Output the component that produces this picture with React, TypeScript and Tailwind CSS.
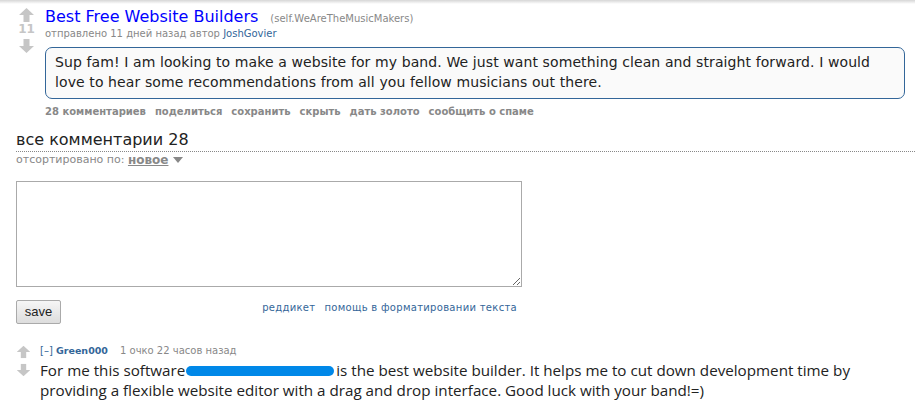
import React from "react";

function Arrow({ up, className }: { up: boolean; className?: string }) {
  return (
    <svg width="15" height="14" viewBox="0 0 15 14" className={className}>
      {up ? (
        <path d="M7.5 0 L15 7 L10.5 7 L10.5 14 L4.5 14 L4.5 7 L0 7 Z" fill="#c6c6c6" />
      ) : (
        <path d="M4.5 0 L10.5 0 L10.5 7 L15 7 L7.5 14 L0 7 L4.5 7 Z" fill="#c6c6c6" />
      )}
    </svg>
  );
}

export default function App() {
  const v = { fontFamily: "Verdana, 'DejaVu Sans', sans-serif" };
  return (
    <div className="w-[915px] h-[408px] bg-white overflow-hidden relative" style={v}>
      <div className="h-[4px] bg-gradient-to-b from-[#d6d6d6] to-white" />
      {/* post */}
      <div className="flex pl-[18px] pt-[4px]">
        <div className="flex flex-col items-center w-[17px]">
          <Arrow up />
          <div className="text-[12px] leading-[13px] font-bold text-[#c6c6c6] mt-[1px]">11</div>
          <Arrow up={false} className="mt-[3px]" />
        </div>
        <div className="ml-[10px] flex-1">
          <div className="flex items-baseline">
            <span className="text-[16px] leading-[18px] text-[#0000ff]">Best Free Website Builders</span>
            <span className="text-[10px] text-[#888] ml-[12px]">(self.WeAreTheMusicMakers)</span>
          </div>
          <div className="text-[10px] leading-[13px] text-[#888] mt-[1px]">
            отправлено 11 дней назад автор <span className="text-[#369]">JoshGovier</span>
          </div>
          <div className="mt-[7px] w-[860px] h-[52px] border border-[#369] rounded-[7px] bg-[#fafafa] px-[9px] pt-[4px] text-[14px] leading-[20px] tracking-[0.1px] text-[#222]">
            Sup fam! I am looking to make a website for my band. We just want something clean and straight forward. I would love to hear some recommendations from all you fellow musicians out there.
          </div>
          <div className="flex gap-[9px] mt-[7px] text-[10px] leading-[12px] font-bold text-[#888]">
            <span>28 комментариев</span>
            <span>поделиться</span>
            <span>сохранить</span>
            <span>скрыть</span>
            <span>дать золото</span>
            <span>сообщить о спаме</span>
          </div>
        </div>
      </div>
      {/* comments header */}
      <div className="ml-[16px] mt-[12px]">
        <div className="text-[16px] leading-[20px] text-[#222] border-b border-dotted border-[#888] pb-[1px]">все комментарии 28</div>
        <div className="text-[11px] leading-[14px] text-[#888] mt-[1px] flex items-center">
          отсортировано по:&nbsp;<span className="font-bold underline text-[#888] text-[12px]">новое</span>
          <svg width="10" height="6" viewBox="0 0 10 6" className="ml-[5px]"><path d="M0 0 L10 0 L5 6 Z" fill="#888" /></svg>
        </div>
        <textarea className="block mt-[14px] w-[506px] h-[106px] border border-[#aaa] bg-white resize" />
        <div className="flex items-center mt-[13px] w-[506px]">
          <button className="w-[45px] h-[24px] border border-[#aaa] rounded-[2px] bg-gradient-to-b from-[#f6f6f6] to-[#dddddd] text-[13px] text-[#222]" style={{ fontFamily: "Arial, 'Liberation Sans', sans-serif" }}>save</button>
          <div className="ml-auto flex gap-[9px] text-[10px] tracking-[0.3px] text-[#369] pr-[5px] -mt-[10px]">
            <span>реддикет</span>
            <span>помощь в форматировании текста</span>
          </div>
        </div>
      </div>
      {/* comment */}
      <div className="flex ml-[16px] mt-[21px]">
        <div className="flex flex-col items-center w-[15px]">
          <Arrow up className="scale-90" />
          <Arrow up={false} className="mt-[4px] scale-90" />
        </div>
        <div className="ml-[9px]">
          <div className="text-[10px] leading-[12px] text-[#888]">
            <span className="text-[#369]">[–]</span> <span className="text-[#369] font-bold text-[9.5px]">Green000</span><span className="ml-[12px]">1 очко 22 часов назад</span>
          </div>
          <div className="text-[15.2px] leading-[20px] text-[#222] mt-[3px] w-[860px]" style={{ fontFamily: "'Open Sans', 'Noto Sans', sans-serif" }}>
            For me this software<span className="inline-block align-middle w-[148px] h-[10px] bg-[#0088e8] rounded-full ml-[1px] mr-[2px] -mt-[2px]" />is the best website builder. It helps me to cut down development time by providing a flexible website editor with a drag and drop interface. Good luck with your band!=)
          </div>
        </div>
      </div>
    </div>
  );
}
